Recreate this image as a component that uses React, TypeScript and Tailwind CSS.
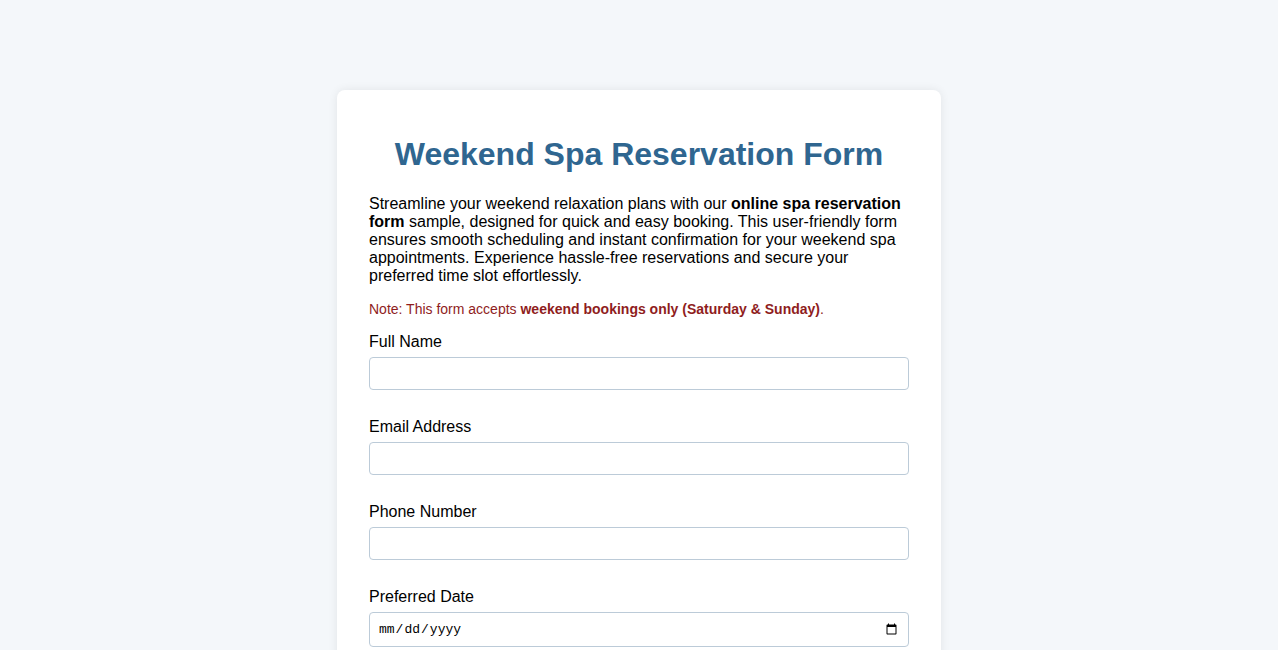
import { useState } from "react";

const fields = [
  { id: "name", label: "Full Name", type: "text" },
  { id: "email", label: "Email Address", type: "email" },
  { id: "phone", label: "Phone Number", type: "tel" },
];

const App = () => {
  const [values, setValues] = useState<Record<string, string>>({});

  const update = (id: string, v: string) => setValues((prev) => ({ ...prev, [id]: v }));

  return (
    <div className="min-h-screen bg-[#f4f7fa] pt-[90px] pb-10 font-['Liberation_Sans',Arial,sans-serif] text-black">
      <div className="mx-auto w-[604px] rounded-lg bg-white px-8 pt-8 pb-8 shadow-[0_0_10px_rgba(0,0,0,0.08)]">
        <h1 className="mt-[14px] text-center text-[32px] leading-[37px] font-bold text-[#2f6690]">
          Weekend Spa Reservation Form
        </h1>

        <p className="mt-[22px] text-base leading-[18px]">
          Streamline your weekend relaxation plans with our <strong>online spa reservation form</strong> sample,
          designed for quick and easy booking. This user-friendly form ensures smooth scheduling and instant
          confirmation for your weekend spa appointments. Experience hassle-free reservations and secure your
          preferred time slot effortlessly.
        </p>

        <p className="mt-[16px] text-sm leading-4 text-[#8f1d1d]">
          Note: This form accepts <strong>weekend bookings only (Saturday &amp; Sunday)</strong>.
        </p>

        <form className="mt-[16px] flex flex-col gap-[28px]" onSubmit={(e) => e.preventDefault()}>
          {fields.map((f) => (
            <div key={f.id} className="flex flex-col gap-[6px]">
              <label htmlFor={f.id} className="text-base leading-[18px]">
                {f.label}
              </label>
              <input
                id={f.id}
                type={f.type}
                value={values[f.id] || ""}
                onChange={(e) => update(f.id, e.target.value)}
                className="h-[33px] w-full rounded border border-[#bccbd8] px-2 text-sm outline-none"
              />
            </div>
          ))}
          <div className="flex flex-col gap-[6px]">
            <label htmlFor="date" className="text-base leading-[18px]">
              Preferred Date
            </label>
            <input
              id="date"
              type="date"
              value={values.date || ""}
              onChange={(e) => update("date", e.target.value)}
              className="h-[35px] w-full rounded border border-[#bccbd8] px-2 font-['Liberation_Mono',monospace] text-[13px] outline-none"
            />
          </div>
        </form>
      </div>
    </div>
  );
};

export default App;
